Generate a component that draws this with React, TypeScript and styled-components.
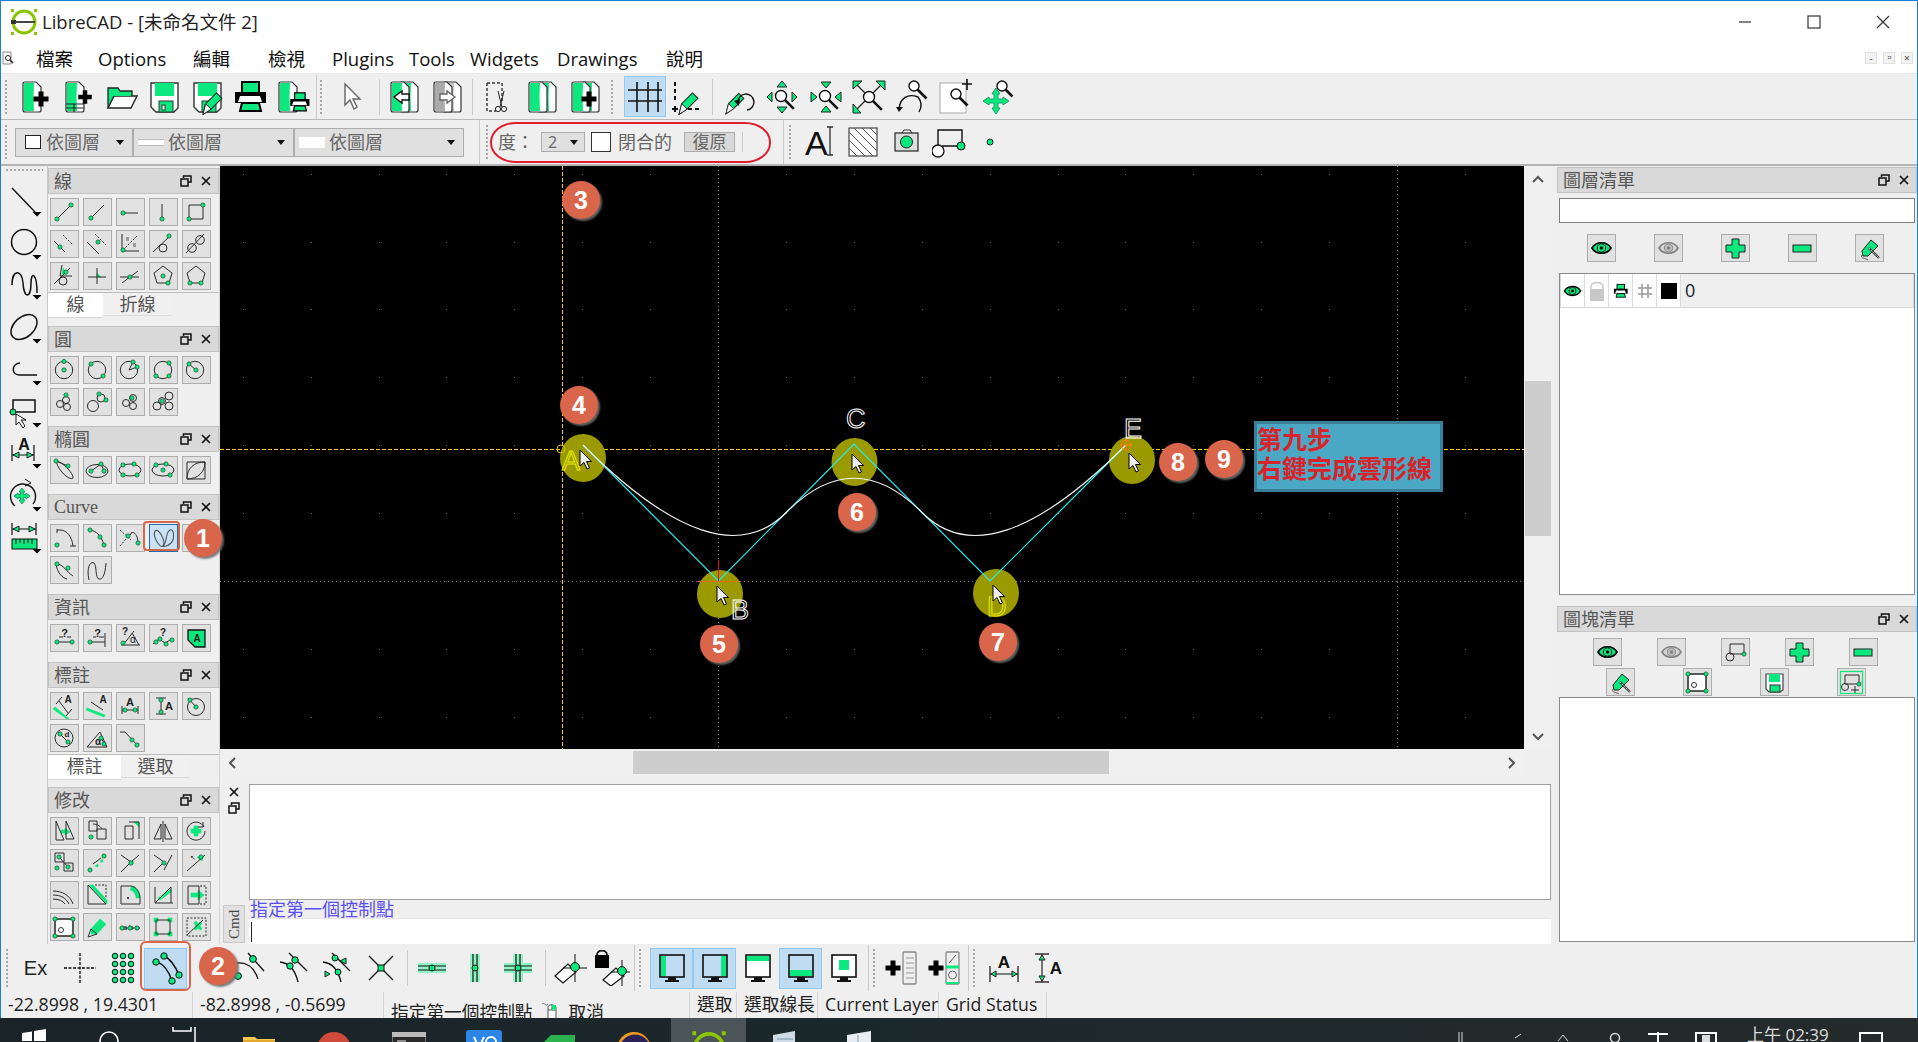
import React from 'react';
import styled, { createGlobalStyle } from 'styled-components';

const GREEN = '#0be87e';
const INK = '#2b2b2b';
const UI = '"Open Sans", "Noto Sans CJK TC", sans-serif';

const Global = createGlobalStyle`
  html, body { margin: 0; padding: 0; background: #efefef; overflow: hidden; }
  * { box-sizing: border-box; }
  svg { display: block; }
`;

const Page = styled.div`position: relative; width: 1918px; height: 1042px; overflow: hidden; font-family: ${UI}; color: #111; display: flex; flex-direction: column;`;
const Frame = styled.div`width: 1918px; height: 1018px; flex: none; border: 1px solid #1a82d4; border-bottom: 0; background: #efefef; display: flex; flex-direction: column;`;
const TitleBar = styled.div`height: 46px; flex: none; background: #fff; display: flex; align-items: center; padding: 0 0 4px 9px; font-size: 18.5px; color: #222;`;
const TitleText = styled.span`margin-left: 4px; white-space: nowrap; margin-top: -3px;`;
const WinButtons = styled.div`margin-left: auto; display: flex; align-items: center;`;
const WinButton = styled.div`width: 69px; height: 42px; display: flex; align-items: center; justify-content: center;`;
const MenuBar = styled.div`height: 27px; flex: none; background: #fff; display: flex; align-items: center; position: relative; font-size: 18.5px; color: #111; border-bottom: 1px solid #e8e8e8; padding-bottom: 4px;`;
const MenuItem = styled.span<{ $w: number }>`width: ${p => p.$w}px; flex: none; white-space: nowrap; line-height: 25px;`;
const MdiButtons = styled.div`margin-left: auto; display: flex; gap: 6px; padding-right: 4px;`;
const MdiButton = styled.div`width: 12px; height: 12px; background: #f2f2f2; border: 1px solid #e2e2e2; color: #555; font-size: 11px; line-height: 9px; text-align: center;`;

const ToolRow = styled.div<{ $h: number; $line?: boolean }>`height: ${p => p.$h}px; flex: none; display: flex; align-items: center; background: #efefef; position: relative; ${p => p.$line ? 'border-top: 1px solid #b9b9b9; border-bottom: 2px solid #b4b4b4;' : ''}`;
const Grip = styled.div<{ $ml?: number; $h?: number }>`width: 4px; height: ${p => p.$h ?? 36}px; flex: none; margin-left: ${p => p.$ml ?? 0}px; background-image: radial-gradient(#a6a6a6 0.9px, transparent 1px); background-size: 4px 4px;`;
const Sep = styled.div<{ $ml?: number; $h?: number }>`width: 1px; height: ${p => p.$h ?? 36}px; flex: none; margin-left: ${p => p.$ml ?? 0}px; background: #c9c9c9;`;
const Slot = styled.div<{ $ml?: number; $w?: number; $active?: boolean }>`
  width: ${p => p.$w ?? 43}px; height: 41px; flex: none; margin-left: ${p => p.$ml ?? 0}px;
  display: flex; align-items: center; justify-content: center;
  ${p => p.$active ? 'background: #c0dcf3; border: 1px solid #90c8f6;' : ''}
`;
const Combo = styled.div<{ $w: number }>`width: ${p => p.$w}px; height: 29px; flex: none; background: #e0e0e0; border: 1px solid #adadad; display: flex; align-items: center; padding: 0 8px; font-size: 18px; line-height: 24px; color: #666; gap: 4px;`;
const ComboArrow = styled.span`margin-left: auto; width: 0; height: 0; border-left: 4px solid transparent; border-right: 4px solid transparent; border-top: 5px solid #111;`;
const ComboRow = styled.div`margin-left: 7px; display: flex;`;
const Swatch = styled.span<{ $kind: string }>`
  flex: none; display: block;
  ${p => p.$kind === 'box' ? 'width:16px;height:14px;background:#fff;border:1px solid #222;margin-left:1px;margin-right:1px;' : ''}
  ${p => p.$kind === 'line' ? 'width:26px;height:7px;background:#fff;border-top:1px solid #bbb;border-bottom:1px solid #bbb;margin-left:-4px;' : ''}
  ${p => p.$kind === 'fill' ? 'width:26px;height:11px;background:#fff;margin-left:-4px;' : ''}
`;
const PlainLabel = styled.span<{ $ml: number; $w?: number }>`margin-left: ${p => p.$ml}px; ${p => p.$w ? `width:${p.$w}px;` : ''} flex: none; font-size: 18px; line-height: 24px; color: #666; white-space: nowrap;`;
const MiniCombo = styled.div`width: 44px; height: 20px; margin-left: 7px; flex: none; background: #e0e0e0; border: 1px solid #adadad; display: flex; align-items: center; padding: 0 6px; font-size: 16px; line-height: 18px; color: #666;`;
const Check = styled.div`width: 20px; height: 20px; margin-left: 6px; flex: none; background: #fff; border: 1px solid #333;`;
const ResetBtn = styled.div`width: 51px; height: 20px; margin-left: 12px; flex: none; background: #d8d8d8; border: 1px solid #adadad; text-align: center; font-size: 17px; line-height: 18px; color: #666;`;

const Main = styled.div`height: 778px; flex: none; display: flex;`;
const ToolColumn = styled.div`width: 47px; flex: none; border-right: 1px solid #c8c8c8; padding-top: 2px;`;
const HGrip = styled.div`height: 4px; margin: 0 4px 7px; background-image: radial-gradient(#a6a6a6 0.9px, transparent 1px); background-size: 4px 4px;`;
const Dock = styled.div`width: 172px; flex: none; border-right: 1px solid #d4d4d4; padding-top: 2px;`;
const DockTitle = styled.div<{ $serif?: boolean; $mt?: number }>`
  height: 26px; flex: none; background: #d9d9d9; border: 1px solid #c2c2c2; display: flex; align-items: center; padding: 0 5px;
  margin-top: ${p => p.$mt ?? 0}px;
  font-family: ${p => p.$serif ? '"Liberation Serif", serif' : UI}; font-size: 18px; line-height: 24px; color: #555;
`;
const TitleLabel = styled.span`flex: 1;`;
const TitleButtons = styled.div`display: flex; align-items: center; gap: 8px; padding-right: 1px;`;
const ButtonGrid = styled.div`display: grid; grid-template-columns: repeat(5, 29px); gap: 4px; padding: 4px 0 0 2px;`;
const IconButton = styled.div<{ $on?: boolean }>`
  width: 29px; height: 28px; flex: none;
  background: ${p => p.$on ? '#c9e2f7' : '#e1e1e1'};
  border: 1px solid ${p => p.$on ? '#1f6fb0' : '#adadad'};
`;
const TabBar = styled.div`margin-top: 2px; display: flex; border-top: 1px solid #bdbdbd; height: 26px; align-items: flex-start;`;
const Tab = styled.div<{ $w: number; $on?: boolean }>`
  width: ${p => p.$w}px; height: ${p => p.$on ? 25 : 23}px; flex: none; text-align: center; font-size: 18px; line-height: 22px; color: #555;
  background: ${p => p.$on ? '#fff' : '#f0f0f0'}; border-bottom: 1px solid ${p => p.$on ? '#d5d5d5' : '#dcdcdc'};
`;

const Center = styled.div`width: 1331px; flex: none; display: flex; flex-direction: column;`;
const CanvasRow = styled.div`height: 583px; flex: none; display: flex;`;
const Canvas = styled.div`width: 1304px; flex: none; background: #000;`;
const VScroll = styled.div`flex: 1; display: flex; flex-direction: column; align-items: stretch; background: #f0f0f0; padding-left: 1px;`;
const VThumb = styled.div`height: 155px; flex: none; background: #cdcdcd;`;
const ArrowCell = styled.div<{ $h: number }>`height: ${p => p.$h}px; flex: none; display: flex; align-items: center; justify-content: center;`;
const Spacer = styled.div<{ $size?: number }>`${p => p.$size ? `flex: 0 0 ${p.$size}px;` : 'flex: 1;'}`;
const HScroll = styled.div`height: 27px; flex: none; display: flex; align-items: center; width: 1304px; background: #f0f0f0;`;
const HThumb = styled.div`width: 476px; height: 23px; flex: none; background: #cdcdcd;`;
const HArrow = styled.div`width: 26px; height: 26px; flex: none; display: flex; align-items: center; justify-content: center;`;
const CommandArea = styled.div`flex: 1; display: flex; padding-top: 8px;`;
const CommandSide = styled.div`width: 29px; flex: none; display: flex; flex-direction: column; align-items: center; padding: 2px 2px 0 0; gap: 4px;`;
const CmdLabel = styled.div`margin-top: auto; margin-bottom: 1px; width: 22px; height: 38px; background: #e1e1e1; border: 1px solid #c9c9c9; font-family: "Liberation Serif", serif; font-size: 15px; color: #444; writing-mode: vertical-rl; transform: rotate(180deg); display: flex; align-items: center; justify-content: center;`;
const CommandMain = styled.div`flex: 1; display: flex; flex-direction: column;`;
const Output = styled.div`height: 116px; flex: none; background: #fff; border: 1px solid #a0a0a0;`;
const History = styled.div`height: 18px; flex: none; padding-left: 1px; font-size: 18px; line-height: 19px; color: #5a50ee; white-space: nowrap;`;
const InputLine = styled.div`flex: 1; background: #fff; border-top: 1px solid #e6e6e6; display: flex; align-items: center; padding-left: 2px;`;
const Caret = styled.span`width: 1px; height: 20px; background: #222;`;

const RightDock = styled.div`flex: 1; padding: 1px 0 0 6px; display: flex; flex-direction: column;`;
const RightInput = styled.div`height: 25px; flex: none; margin: 5px 2px 0; background: #fff; border: 1px solid #7c7c7c;`;
const ButtonRow = styled.div<{ $gap: number; $pl: number; $mt: number }>`display: flex; flex: none; gap: ${p => p.$gap}px; padding-left: ${p => p.$pl}px; margin-top: ${p => p.$mt}px;`;
const LayerList = styled.div`height: 322px; flex: none; margin: 11px 2px 0; background: #fff; border: 1px solid #8a8a8a;`;
const LayerRow = styled.div`height: 34px; display: flex; background: #efefef; border: 1px solid #d8d8d8; border-top: 0;`;
const LayerCell = styled.div`width: 24px; height: 33px; flex: none; background: #fff; border-right: 1px solid #dcdcdc; display: flex; align-items: center; justify-content: center;`;
const LayerName = styled.div`padding-left: 4px; font-size: 18px; line-height: 33px; color: #123;`;
const BlockList = styled.div`height: 245px; flex: none; margin: 1px 2px 0; background: #fff; border: 1px solid #8a8a8a;`;

const BottomBar = styled.div`height: 48px; flex: none; display: flex; align-items: center; background: #efefef;`;
const ExLabel = styled.span`font-family: "Liberation Sans", sans-serif; font-size: 20px; color: #222; margin-left: -2px;`;
const StatusBar = styled.div`height: 26px; flex: none; display: flex; background: #efefef; font-size: 17.7px; color: #222; overflow: hidden;`;
const StatusCell = styled.div<{ $w: number; $top?: number }>`width: ${p => p.$w}px; flex: none; height: 26px; padding-left: 7px; border-right: 1px solid #d4d4d4; line-height: 25px; white-space: nowrap; display: flex; gap: 8px; ${p => p.$top ? `padding-top:${p.$top}px;` : ''}`;

const Taskbar = styled.div`height: 24px; flex: none; background: linear-gradient(90deg, #1a2428, #1b282b 45%, #262b2b); display: flex; overflow: hidden; position: relative;`;
const TaskSlot = styled.div<{ $on?: boolean; $top: number }>`width: 75px; height: 24px; flex: none; display: flex; justify-content: center; padding-top: ${p => p.$top}px; background: ${p => p.$on ? '#4b5456' : 'transparent'};`;
const TaskStart = styled.div`width: 0; flex: none; margin-left: -4px;`;
const Tray = styled.div`margin-left: auto; display: flex; padding-top: 14px; padding-right: 35px; gap: 26px;`;
const ClockText = styled.div`position: absolute; left: 1747px; top: 3px; font-size: 17px; color: #ddd; white-space: nowrap;`;

const Badge = styled.div<{ $x: number; $y: number }>`
  position: absolute; left: ${p => p.$x - 19}px; top: ${p => p.$y - 19}px; width: 38px; height: 38px; border-radius: 50%;
  background: #d9654a; box-shadow: 2px 2px 2px rgba(110,110,110,.9); color: #fff;
  font: bold 25px/38px "Liberation Sans", sans-serif; text-align: center;
`;
const Ring = styled.div<{ $x: number; $y: number; $w: number; $h: number; $r: number }>`
  position: absolute; left: ${p => p.$x}px; top: ${p => p.$y}px; width: ${p => p.$w}px; height: ${p => p.$h}px;
  border: 2px solid #d9654a; border-radius: ${p => p.$r}px;
`;
const RedOval = styled.div`position: absolute; left: 490px; top: 122px; width: 281px; height: 41px; border: 2px solid #e01e2e; border-radius: 26px / 20px;`;
const Note = styled.div`
  position: absolute; left: 1254px; top: 421px; width: 189px; height: 71px; background: #4aa8c4; border: 3px solid #3a7f97;
  color: #d8232a; font: bold 25px/29px "Noto Sans CJK TC", sans-serif; padding: 0; white-space: nowrap;
`;

/* ---------- small dock icons ---------- */
type Pt = [number, number];
interface Glyph { d?: string; dots?: Pt[]; green?: string; dash?: string; extra?: React.ReactNode; }
const circ = (x: number, y: number, r: number) => `M${x - r} ${y}a${r} ${r} 0 1 0 ${2 * r} 0a${r} ${r} 0 1 0 ${-2 * r} 0`;
const ell = (x: number, y: number, a: number, b: number) => `M${x - a} ${y}a${a} ${b} 0 1 0 ${2 * a} 0a${a} ${b} 0 1 0 ${-2 * a} 0`;
const g = (d: string, dots: Pt[] = [], green = '', dash = '', extra?: React.ReactNode): Glyph => ({ d, dots, green, dash, extra });
const T = ({ x, y, s = 9, c = '#222', w = 700, children }: { x: number; y: number; s?: number; c?: string; w?: number; children: React.ReactNode }) => (
  <text x={x} y={y} fontSize={s} fontWeight={w} fill={c} fontFamily='"Liberation Sans", sans-serif' textAnchor="middle">{children}</text>
);

const Small = ({ g: gl }: { g: Glyph }) => (
  <svg width="27" height="26" viewBox="1 1 27 26">
    {gl.green && <path d={gl.green} fill={GREEN} stroke={GREEN} strokeWidth=".6" />}
    {gl.d && <path d={gl.d} fill="none" stroke={INK} strokeWidth="1" />}
    {gl.dash && <path d={gl.dash} fill="none" stroke={INK} strokeWidth="1" strokeDasharray="2 1.5" />}
    {gl.extra}
    {gl.dots?.map(([x, y], i) => <circle key={i} cx={x} cy={y} r="2.1" fill={GREEN} stroke="#1d5c3b" strokeWidth=".8" />)}
  </svg>
);

const lineTools: Glyph[] = [
  g('M7 21L21 7', [[7, 21], [21, 7]]),
  g('M8 20L21 7', [[8, 20]]),
  g('M7 15H22', [[7, 15]]),
  g('M13 6V21', [[13, 21]]),
  g('M7 7H21V21H7Z', [[7, 21], [21, 7]]),
  g('M4 11L15 22', [[10, 17]], '', 'M13 5L23 15'),
  g('M4 12L16 24', [[15, 12]], '', 'M12 4L23 15'),
  g('M6 4V21H23', [[7, 20]], '', 'M7 20L21 6', <><path d="M10 8h3M10 10h3M17 14h3M17 16h3" stroke="#555" strokeWidth="1" /></>),
  g(`M4 22L21 6${circ(14, 18, 4)}`, [[20, 6]]),
  g(`M4 23L22 4${circ(10, 18, 4.3)}${circ(18, 10, 4.3)}`),
  g(`M12 3L10 14L22 14M4 22L20 6${circ(13, 19, 4)}`, [[16, 10]], 'M13 6L17 12L12 13Z'),
  g('M14 6V22M5 15H23', [], 'M14 11L18 15H14Z'),
  g('M4 15H23M6 21L22 9', [[14, 15]]),
  g('M14 4L23 11L20 21H8L5 11Z', [[14, 14], [19, 21]]),
  g('M14 4L23 11L20 21H8L5 11Z', [[8, 21], [19, 21]]),
];
const circleTools: Glyph[] = [
  g(circ(14, 14, 8.7), [[14, 14], [14, 5.5]]),
  g(circ(14, 14, 8.7), [[8, 8], [20, 20]]),
  g(`${circ(13, 14, 8.7)}M13 14L17 6M13 14L21 11`, [[17, 6], [21, 11]]),
  g(circ(14, 14, 8.7), [[7, 20], [20, 7], [20, 20]]),
  g(`${circ(13, 14, 8.7)}M7 8L14 14`, [[7, 8], [14, 14]]),
  g(`${circ(16, 12, 3.5)}${circ(10, 16, 3.5)}${circ(17, 19, 3.5)}`, [[16, 7]]),
  g(`${circ(10, 18, 5.5)}${circ(18, 10, 4)}`, [[16, 6], [23, 12]]),
  g(`${circ(10, 15, 3.5)}${circ(17, 10, 3.5)}${circ(17, 18, 3.5)}`, [[16, 10]]),
  g(`${circ(8, 18, 4)}${circ(20, 8, 4)}${circ(20, 18, 4)}${circ(13, 13, 3.5)}`, [[13, 13]]),
];
const ellipseTools: Glyph[] = [
  g('M6 5C12 5 24 18 23 22C21 25 9 17 6 5ZM6 5L18 10', [[6, 5], [18, 10]]),
  g(`${ell(14, 15, 11, 6.5)}M8 15L18 8L21 15`, [[8, 15], [18, 8], [21, 15]]),
  g(ell(14, 14, 11, 6), [[7, 9], [18, 8], [7, 19], [21, 19]]),
  g(ell(14, 14, 11, 6), [[7, 9], [17, 8], [21, 19], [14, 14]]),
  g('M5 6H23V23H5ZM5 23C5 12 12 6 23 6C23 16 16 23 5 23Z'),
];
const curveTools: Glyph[] = [
  g('M7 5V9M7 6H10C17 6 22 13 23 22M20 22H26', [[7, 21]]),
  g('M7 6C13 7 18 11 21 21', [[7, 6], [17, 13], [21, 21]]),
  g('M14 11C17 5 22 11 22 19', [[22, 19], [12, 12]], '', 'M4 6L15 16M4 22L16 8'),
  g('', [], '', '', <path d="M6 7C10 3 17 18 14 22C11 25 3 12 6 7ZM14 22C18 21 16 8 21 6C25 4 26 15 22 19C19 22 15 23 14 22Z" fill="none" stroke="#555" strokeWidth="1.1" />),
  g('M5 8L12 22'),
  g('M6 8C14 8 16 16 23 20M6 8C7 16 12 22 17 23', [[7, 8], [18, 12]]),
  g('M6 24C3 10 8 5 11 7C14 10 12 22 16 23C19 24 22 20 23 7'),
];
const infoTools: Glyph[] = [
  g('M7 18H22M9 13H13M17 13H21', [[7, 18], [22, 18]], '', '', <T x={14.5} y={13} s={11}>?</T>),
  g('M7 18H22M22 9V23M10 13H13M16 13H21', [[7, 18]], '', '', <T x={14.5} y={13} s={11}>?</T>),
  g('M5 21H24M7 21L18 7M16 9L23 21', [[7, 19]], '', '', <><T x={9} y={11} s={10}>?</T><T x={17} y={19} s={10} w={400}>α</T></>),
  g('M4 20L10 15L16 19L23 15', [[7, 18], [11, 15], [17, 20], [23, 16]], '', '', <T x={14} y={12} s={10}>?</T>),
  g('', [], '', '', <><path d="M6 6H23V23H13L6 16Z" fill={GREEN} stroke="#111" strokeWidth="1.3" /><T x={15} y={18} s={10}>A</T></>),
];
const dimTools: Glyph[] = [
  g('M9 9L18 21M6 12L12 5M16 24L22 17', [], 'M3 17L5 15L19 27L17 27Z', '', <T x={18} y={11} s={10}>A</T>),
  g('M8 10L20 18', [], 'M3 18L4 16L22 23L21 25Z', '', <T x={20} y={11} s={10}>A</T>),
  g('M6 14V22M22 14V22M6 18H22', [[9, 18], [19, 18]], '', '', <T x={14} y={14} s={11}>A</T>),
  g('M7 6H17M7 22H17M12 6V22', [[12, 8], [12, 20]], '', '', <T x={20} y={18} s={11}>A</T>),
  g(`${circ(14, 15, 8.5)}M6 6L14 15`, [[8, 8], [14, 15]]),
  g(`${circ(14, 14, 9)}M8 8L20 20`, [[10, 10], [18, 18]], '', '', <T x={17} y={13} s={8}>d</T>),
  g('M4 23H24L17 8ZM17 14A9 9 0 0 1 21 22', [[18, 14], [21, 20]], '', '', <T x={15} y={21} s={10}>α</T>),
  g('M4 8H9L21 21', [[16, 16], [21, 21]]),
];
const modifyTools: Glyph[] = [
  g('M6 4L6 23H14L6 4ZM16 4L24 22H16Z', [], 'M11 13H15V11L20 15L15 18V16H11Z'),
  g(`M6 4H14V14H6ZM14 12H23V22H14ZM10 7C15 7 18 10 19 12`, [[8, 20]]),
  g('M9 9H17V22H9ZM13 5H23V22', [], 'M18 5H23V10Z'),
  g('M5 22L12 7V22ZM23 22L16 7V22ZM14 4V25'),
  g(`M22 10A9 9 0 1 0 23 14`, [], 'M12 9H16V12H19V16H16V19H12V16H9V12H12Z', '', <path d="M21 5V10H16" fill="none" stroke={INK} />),
  g('M5 4H14V13H5ZM14 14H23V22H14ZM9 8L18 18', [[7, 19], [9, 8], [18, 18]]),
  g('M10 15L18 9', [[7, 21], [21, 7]], 'M12 17L15 15L15 18ZM17 13L19 10L20 13Z'),
  g('M5 6L15 13L5 23M23 6L15 13', [[15, 14]], 'M14 12h3v3h-3z'),
  g('M5 6L15 13L5 23M23 6L15 21', [[15, 14]]),
  g('M5 22L23 6', [[19, 8]], 'M15 8L21 7L20 12Z', '', <T x={11} y={11} s={7} w={400}>↖</T>),
  g('M3 10C12 10 20 14 23 23M3 14C11 14 16 17 19 23M3 18C9 18 13 20 15 23'),
  g('M5 4V23H23L5 4', [], 'M6 4L10 4L24 19V23Z', 'M12 4H23V16'),
  g('M5 5H14C20 5 24 11 24 17V23H5Z', [], 'M16 5C20 6 24 11 24 17H20C20 13 17 9 14 9Z', '', <circle cx="12" cy="17" r="1" fill="#111" />),
  g('M6 6V22H24M6 22L22 6M22 6V22', [], 'M9 17L22 8L22 11L11 19Z'),
  g('M6 5H17V23H6Z', [], 'M9 12H16V9L22 14L16 19V16H9Z', 'M18 5H24V23H18'),
  g('', [[5, 6], [23, 6], [5, 23], [23, 23]], '', '', <><rect x="5" y="6" width="18" height="17" fill="#fff" stroke="#333" strokeWidth="1.6" /><circle cx="11" cy="17" r="2.5" fill="#fff" stroke="#333" /></>),
  g('', [], 'M8 16L17 6L23 11L14 21L8 21Z', '', <path d="M8 16L5 24L14 21M14 21L8 16" fill="none" stroke="#333" />),
  g('M4 15H24', [[6, 15], [14, 15], [21, 15]], '', '', <><T x={9} y={17} s={8} w={400}>a</T><T x={15} y={17} s={8} w={400}>b</T><T x={21} y={17} s={8} w={400}>c</T></>),
  g('M7 7H21V21H7Z', [], 'M5 5h4v4H5zM19 5h4v4h-4zM5 19h4v4H5zM19 19h4v4h-4z'),
  g('M5 22L21 7', [], 'M12 10L14 8L16 11L18 9L20 10L18 13L20 16L18 17L16 15L14 17L12 16L14 13Z', 'M5 5H24V23H5Z'),
];

const Eye = ({ gray }: { gray?: boolean }) => (
  <svg width="27" height="26" viewBox="1 1 27 26" style={gray ? { opacity: .42 } : undefined}>
    <path d="M5 14C9 7 20 7 24 14C20 21 9 21 5 14Z" fill={gray ? '#ccc' : GREEN} stroke="#000" strokeWidth="1.7" />
    <circle cx="14.5" cy="14" r="4.2" fill={gray ? '#888' : GREEN} stroke="#111" />
    <circle cx="14.5" cy="14" r="1.7" fill="#000" />
  </svg>
);
const plusG = g('', [], '', '', <path d="M11 5H18V11H24V18H18V24H11V18H5V11H11Z" fill={GREEN} stroke="#222" strokeWidth="1" />);
const minusG = g('', [], '', '', <rect x="5" y="11" width="18" height="7" fill={GREEN} stroke="#222" />);
const editG = g('', [], '', '', <><path d="M7 17L16 6L23 12L13 22L8 22Z" fill={GREEN} stroke="#222" /><path d="M14 14L24 24" stroke="#444" strokeWidth="2.4" /><path d="M14 14L24 24" stroke="#fff" strokeWidth=".8" strokeDasharray="1.5 1.5" /><path d="M7 21C5 25 11 24 13 26" fill="none" stroke="#555" /></>);
const blockG = g(`M9 16V6H23V16M9 16H23${circ(9, 19, 4)}`, [[23, 16]]);
const saveG = g('', [], '', '', <><path d="M6 6H23V22L20 24H9L6 21Z" fill="#fff" stroke="#444" strokeWidth="1.2" /><rect x="9" y="6" width="11" height="8" fill={GREEN} /><rect x="10" y="17" width="10" height="7" fill={GREEN} stroke="#333" /></>);
const addBlockG = g(`M8 16V7H22V16M8 16H22${circ(8, 19, 3.5)}M14 22H22M18 18V26`, [[22, 16]], '', '', <rect x="3.5" y="3.5" width="22" height="22" fill="none" stroke={GREEN} strokeWidth="1.2" />);

/* ---------- big toolbar icons ---------- */
const Big = ({ children, w = 36, h = 36 }: { children: React.ReactNode; w?: number; h?: number }) => (
  <svg width={w} height={h} viewBox={`0 0 ${w} ${h}`}>{children}</svg>
);
const Page2 = ({ x = 4, fill = GREEN }: { x?: number; fill?: string }) => (
  <>
    <path d={`M${x} 5Q${x} 3 ${x + 2} 3H${x + 13}L${x + 18} 8V31Q${x + 18} 33 ${x + 16} 33H${x + 2}Q${x} 33 ${x} 31Z`} fill="#fff" stroke="#333" strokeWidth="1.2" />
    <path d={`M${x + 1} 5Q${x + 1} 4 ${x + 2} 4H${x + 11}Q${x + 10} 18 ${x + 11} 32H${x + 2}Q${x + 1} 32 ${x + 1} 31Z`} fill={fill} />
  </>
);
const BlackPlus = ({ x, y, s = 4 }: { x: number; y: number; s?: number }) => (
  <path d={`M${x - s / 2} ${y - s * 1.5}h${s}v${s}h${s}v${s}h${-s}v${s}h${-s}v${-s}h${-s}v${-s}h${s}z`} fill="#000" />
);
const Floppy = ({ children }: { children?: React.ReactNode }) => (
  <>
    <path d="M4 4H31V29L27 33H9L4 28Z" fill="#fff" stroke="#333" strokeWidth="1.4" />
    <rect x="8" y="4" width="19" height="13" fill={GREEN} />
    <rect x="12" y="22" width="14" height="11" fill={GREEN} stroke="#333" />
    <rect x="15" y="26" width="3" height="5" fill="#fff" stroke="#333" />
    {children}
  </>
);
const Printer = ({ sc = 1 }: { sc?: number }) => (
  <g transform={`scale(${sc})`}>
    <rect x="9" y="3" width="17" height="11" fill={GREEN} stroke="#000" strokeWidth="2" />
    <rect x="2" y="13" width="31" height="11" fill="#000" />
    <path d="M7 17H27L29 23H5Z" fill="#fff" />
    <path d="M9 24H26L28 32H7Z" fill={GREEN} stroke="#000" strokeWidth="2" />
  </g>
);
const Pencil = ({ tr }: { tr: string }) => (
  <g transform={tr}>
    <path d="M0 15L3 3L15 -9L21 -3L9 9Z" fill={GREEN} stroke="#222" strokeWidth="1.2" />
    <path d="M0 15L3 3L9 9Z" fill="#fff" stroke="#222" strokeWidth="1" />
  </g>
);
const Mag = ({ x, y, r = 5.5, l = 9 }: { x: number; y: number; r?: number; l?: number }) => (
  <>
    <circle cx={x} cy={y} r={r} fill="#fff" stroke="#111" strokeWidth="1.4" />
    <path d={`M${x + r * .7} ${y + r * .7}l${l} ${l}`} stroke="#111" strokeWidth="2.6" />
  </>
);
const tri = (p: string) => <path d={p} fill={GREEN} stroke="#222" strokeWidth="1" />;

const top1: React.ReactNode[] = [
  <Big><Page2 x={5} /><BlackPlus x={23} y={20} s={5} /></Big>,
  <Big><Page2 x={5} /><path d="M5 25H23M5 29H23M13 25V33" stroke="#222" strokeWidth="1.2" /><BlackPlus x={24} y={18} s={4.5} /></Big>,
  <Big><path d="M4 29V9H14L16 12H28V17" fill={GREEN} stroke="#222" strokeWidth="1.3" /><path d="M4 29L10 17H33L27 29Z" fill="#fff" stroke="#222" strokeWidth="1.4" /><path d="M5 17V12H13L15 14H27V17Z" fill={GREEN} /></Big>,
  <Big><Floppy /></Big>,
  <Big><Floppy><Pencil tr="translate(13 22) scale(.9)" /></Floppy></Big>,
  <Big><Printer /></Big>,
  <Big><Page2 x={3} /><g transform="translate(13 12) scale(.62)"><Printer /></g></Big>,
];
const selectIcon = <Big><path d="M10 5V26L15 21L19 30L22 28L18 20H25Z" fill="#fff" stroke="#666" strokeWidth="1.4" /></Big>;
const undoIcon = <Big><Page2 x={13} /><Page2 x={4} /><path d="M7 18L15 12V15H22V21H15V24Z" fill="#fff" stroke="#111" strokeWidth="1.4" /></Big>;
const redoIcon = <Big><Page2 x={13} fill="#c4c4c4" /><Page2 x={4} fill="#aaa" /><path d="M25 18L17 12V15H10V21H17V24Z" fill="#fff" stroke="#666" strokeWidth="1.4" /></Big>;
const cutIcon = <Big><path d="M9 4H24V22M9 4V32H18" fill="none" stroke="#333" strokeWidth="1.4" strokeDasharray="3 2" /><path d="M20 12L24 28M26 12L22 28" stroke="#222" strokeWidth="1" /><circle cx="20" cy="30" r="2.6" fill="none" stroke="#222" /><circle cx="26" cy="30" r="2.6" fill="none" stroke="#222" /></Big>;
const copyIcon = <Big><Page2 x={13} /><Page2 x={4} /></Big>;
const pasteIcon = <Big><Page2 x={13} /><Page2 x={4} /><BlackPlus x={21} y={20} s={5} /></Big>;
const gridIcon = <Big><path d="M10 3V33M21 3V33M31 3V33M1 11H35M1 22H35" stroke="#111" strokeWidth="1.6" /></Big>;
const draftIcon = <Big><path d="M5 3V24M4 30H32" stroke="#111" strokeWidth="2" strokeDasharray="4 3" /><path d="M2 30H8M5 27V33" stroke="#111" strokeWidth="2" /><Pencil tr="translate(9 22) scale(.9)" /></Big>;
const view: React.ReactNode[] = [
  <Big><Pencil tr="translate(5 22) scale(.85)" /><path d="M26 31A8 8 0 1 0 17 24" fill="none" stroke="#111" strokeWidth="1.4" /><path d="M13 22L19 20L18 27Z" fill="#111" /></Big>,
  <Big>{tri('M18 2L23 8H13Z')}{tri('M18 34L13 28H23Z')}{tri('M3 18L8 13V23Z')}{tri('M33 18L28 23V13Z')}<Mag x={17} y={17} /></Big>,
  <Big>{tri('M18 9L13 3H23Z')}{tri('M18 27L23 33H13Z')}{tri('M9 18L3 13V23Z')}{tri('M27 18L33 23V13Z')}<Mag x={17} y={17} /></Big>,
  <Big><path d="M6 6L30 30M30 6L6 30" stroke="#222" strokeWidth="1.3" />{tri('M2 2H11L2 10Z')}{tri('M34 2V11L25 2Z')}{tri('M2 34V25L10 34Z')}<Mag x={18} y={18} /></Big>,
  <Big><path d="M4 30C5 19 13 14 23 18C27 23 27 28 24 33" fill="none" stroke="#111" strokeWidth="1.4" /><path d="M1 28L8 28L4 33Z" fill="#111" /><Mag x={19} y={7} r={5} /></Big>,
  <Big><rect x="2" y="4" width="26" height="30" fill="#fff" stroke="#bbb" strokeWidth="1.3" /><Mag x={18} y={15} r={5} l={8} /><path d="M29 0V11M24 5H34" stroke="#111" strokeWidth="1.6" /></Big>,
  <Big><path d="M14 9L18 15H16V20H21V18L27 22L21 26V24H16V29H18L14 35L10 29H12V24H7V26L1 22L7 18V20H12V15H10Z" fill={GREEN} stroke="#1ba266" strokeWidth="1" /><Mag x={20} y={7} r={5} l={7} /></Big>,
];
const row2Icons: React.ReactNode[] = [
  <Big><text x="2" y="31" fontSize="34" fontFamily='"Liberation Sans", sans-serif' fill="#111">A</text><path d="M27 3V31M24 3H30M24 31H30" stroke="#333" strokeWidth="1.3" /></Big>,
  <Big><rect x="3" y="4" width="28" height="28" fill="#fff" stroke="#444" strokeWidth="1.2" /><path d="M3 8L27 32M3 16L19 32M3 24L11 32M8 4L31 27M16 4L31 19M24 4L31 11" stroke="#444" strokeWidth=".9" /></Big>,
  <Big><rect x="6" y="9" width="23" height="18" fill="#ddd" stroke="#333" strokeWidth="1.3" /><path d="M13 9L15 6H21L23 9" fill="none" stroke="#333" /><circle cx="17.500" cy="18" r="6" fill={GREEN} stroke="#222" /></Big>,
  <Big><path d="M6 27V6H30V22M10 22H26" fill="none" stroke="#111" strokeWidth="1.4" /><circle cx="6" cy="27" r="6" fill="#fff" stroke="#111" strokeWidth="1.3" /><circle cx="29" cy="22" r="4" fill={GREEN} stroke="#111" /></Big>,
  <Big><circle cx="15" cy="18" r="3" fill={GREEN} stroke="#222" /></Big>,
];

const snapIcons: React.ReactNode[] = [
  <Big><path d="M14 3L30 21M3 13C12 12 20 17 24 29" fill="none" stroke="#111" strokeWidth="1.3" /><circle cx="19" cy="9" r="3.4" fill={GREEN} stroke="#111" /><circle cx="4" cy="26" r="3.4" fill={GREEN} stroke="#111" /></Big>,
  <Big><path d="M12 3L30 21M3 12C12 13 18 19 21 32" fill="none" stroke="#111" strokeWidth="1.3" /><circle cx="18" cy="10" r="3.2" fill={GREEN} stroke="#111" /><circle cx="13" cy="16" r="3.2" fill={GREEN} stroke="#111" /></Big>,
  <Big><path d="M12 3L30 21M3 12C12 13 18 19 21 32" fill="none" stroke="#111" strokeWidth="1.3" /><circle cx="15" cy="8" r="3" fill={GREEN} stroke="#111" /><circle cx="18" cy="22" r="3" fill={GREEN} stroke="#111" />{tri('M26 8L20 11L26 14Z')}{tri('M5 21L10 24L5 27Z')}</Big>,
  <Big><path d="M6 6L30 30M30 6L6 30" stroke="#111" strokeWidth="1.3" /><rect x="15" y="15" width="6" height="6" fill={GREEN} stroke="#111" /></Big>,
];
const BAND = '#8ff5c4';
const restrictIcons: React.ReactNode[] = [
  <Big><rect x="4" y="13" width="28" height="10" fill={BAND} /><path d="M4 16H32M4 20H32" stroke="#111" strokeWidth="1.2" /><circle cx="18" cy="18" r="3" fill={GREEN} stroke="#111" /></Big>,
  <Big><rect x="13" y="4" width="10" height="28" fill={BAND} /><path d="M16 4V32M20 4V32" stroke="#111" strokeWidth="1.2" /><circle cx="18" cy="18" r="3" fill={GREEN} stroke="#111" /></Big>,
  <Big><path d="M4 13H32V23H4ZM13 4H23V32H13Z" fill={BAND} /><path d="M4 16H32M4 20H32M16 4V32M20 4V32" stroke="#111" strokeWidth="1.2" /><circle cx="18" cy="18" r="3" fill={GREEN} stroke="#111" /></Big>,
];
const Snap0 = (
  <Big><path d="M4 26L17 14L25 22L12 33Z" fill="#fff" stroke="#111" strokeWidth="1.2" /><path d="M24 4V32M12 18H36" stroke="#111" strokeWidth="1" /><circle cx="24" cy="17" r="4.4" fill={GREEN} stroke="#111" /></Big>
);
const Snap1 = (
  <Big><path d="M3 5C3 -1 13 -1 13 5" fill="none" stroke="#111" strokeWidth="1.8" /><rect x="1" y="5" width="14" height="13" fill="#000" /><path d="M9 30L22 18L30 26L17 36Z" fill="#fff" stroke="#111" strokeWidth="1.2" /><path d="M28 10V36M17 22H36" stroke="#111" strokeWidth="1" /><circle cx="28" cy="21" r="4.4" fill={GREEN} stroke="#111" /></Big>
);
const Monitor = ({ green, on }: { green: [number, number, number, number]; on?: boolean }) => (
  <Big>
    <rect x="6" y="5" width="24" height="22" fill={on ? 'none' : '#fff'} stroke="#111" strokeWidth="1.6" />
    <rect x={green[0]} y={green[1]} width={green[2]} height={green[3]} fill={GREEN} />
    <path d="M15 28H21V30H15ZM11 31H25" stroke="#111" strokeWidth="2" />
  </Big>
);
const AddList = (
  <Big><rect x="20" y="2" width="13" height="32" rx="1" fill="#eee" stroke="#888" strokeWidth="1.3" /><path d="M23 8H31M23 13H31M23 18H31M23 23H31M23 28H31" stroke="#999" strokeWidth="1.2" /><BlackPlus x={10} y={18} s={5} /></Big>
);
const AddBlock = (
  <Big><rect x="20" y="2" width="13" height="32" rx="1" fill="#eee" stroke="#888" strokeWidth="1.3" /><path d="M20 17H33" stroke={GREEN} strokeWidth="3" /><path d="M23 13L30 5" stroke="#555" /><circle cx="26.500" cy="25" r="4" fill="none" stroke="#666" /><path d="M20 33H33" stroke={GREEN} strokeWidth="2" /><BlackPlus x={10} y={18} s={5} /></Big>
);
const dimH = <Big><path d="M4 16V32M32 16V32M4 24H32" stroke="#111" strokeWidth="1.2" />{tri('M5 24L10 21V27Z')}{tri('M31 24L26 21V27Z')}<text x="18" y="18" textAnchor="middle" fontSize="17" fontWeight="700" fontFamily='"Liberation Sans", sans-serif' fill="#111">A</text></Big>;
const dimV = <Big><path d="M6 4H20M6 32H20M13 4V32" stroke="#333" strokeWidth="1.3" />{tri('M13 5L10 10H16Z')}{tri('M13 31L10 26H16Z')}<text x="27" y="24" textAnchor="middle" fontSize="17" fontWeight="700" fontFamily='"Liberation Sans", sans-serif' fill="#111">A</text></Big>;

/* ---------- left tool column ---------- */
const Dn = ({ x = 36, y = 33 }: { x?: number; y?: number }) => <path d={`M${x - 4.500} ${y}h9l-4.500 4.500z`} fill="#000" />;
const columnIcons: React.ReactNode[] = [
  <><path d="M11 9L34 33" stroke="#111" strokeWidth="1.4" /><Dn /></>,
  <><circle cx="23" cy="21" r="12.500" fill="none" stroke="#111" strokeWidth="1.5" /><Dn y={34} /></>,
  <><path d="M11 22C11 6 21 6 22 20C23 36 30 36 30 20C30 8 36 10 36 30" fill="none" stroke="#111" strokeWidth="1.5" /><Dn y={32} /></>,
  <><ellipse cx="23" cy="22" rx="15" ry="10" transform="rotate(-42 23 22)" fill="none" stroke="#111" strokeWidth="1.5" /><Dn y={34} /></>,
  <><path d="M19 16C10 17 10 28 19 28H36" fill="none" stroke="#111" strokeWidth="1.5" /><Dn y={34} /></>,
  <><rect x="12" y="11" width="22" height="12" fill="none" stroke="#111" strokeWidth="1.5" /><circle cx="12" cy="23" r="3" fill={GREEN} stroke="#111" /><path d="M15 25L15 36L18 33L22 39L24 37L20 31H25Z" fill="#fff" stroke="#111" /><Dn y={34} /></>,
  <><text x="23" y="19" textAnchor="middle" fontSize="16" fontWeight="700" fontFamily='"Liberation Sans", sans-serif' fill="#111">A</text><path d="M11 14V30M33 14V30M11 24H33" stroke="#111" strokeWidth="1.2" />{tri('M12 24L18 21V27Z')}{tri('M32 24L26 21V27Z')}<Dn y={33} /></>,
  <><path d="M14 33A12.500 12.500 0 1 1 32 31" fill="none" stroke="#111" strokeWidth="1.4" /><path d="M24 6L30 10L24 13" fill="none" stroke="#111" /><path d="M21 15L24 19H22.500V21.500H25V20L29 23L25 26V24.500H22.500V27H24L21 31L18 27H19.500V24.500H17V26L13 23L17 20V21.500H19.500V19H18Z" fill={GREEN} stroke="#1ba266" /><Dn y={34} /></>,
  <><path d="M11 8V20M35 8V20M11 14H35" stroke="#111" strokeWidth="1.2" />{tri('M12 14L18 11V17Z')}{tri('M34 14L28 11V17Z')}<rect x="11" y="24" width="25" height="10" fill={GREEN} stroke="#111" /><path d="M15 24V29M19 24V28M23 24V29M27 24V28M31 24V29" stroke="#111" /><Dn y={34} /></>,
];
const ColumnItem = styled.div`height: 42px; flex: none;`;

const WinFloat = () => (
  <svg width="12" height="12" viewBox="0 0 12 12"><path d="M3.500 3V1H11V7H8.500M1 4H8V11H1Z" fill="none" stroke="#111" strokeWidth="1.5" /></svg>
);
const WinX = () => (
  <svg width="12" height="12" viewBox="0 0 12 12"><path d="M2 2L10 10M10 2L2 10" stroke="#111" strokeWidth="1.7" /></svg>
);
const TitleBtns = () => <TitleButtons><WinFloat /><WinX /></TitleButtons>;

const Logo = ({ s = 28 }: { s?: number }) => (
  <svg width={s} height={s} viewBox="0 0 28 28">
    <circle cx="14" cy="14" r="11" fill="none" stroke="#8bc400" strokeWidth="3" />
    <path d="M1 1h3v3H1zM24 1h3v3h-3zM1 24h3v3H1zM24 24h3v3h-3z" fill="#8bc400" />
    <path d="M1 12h5v4H1z" fill="#333" />
    <path d="M5 14H25" stroke="#444" strokeWidth="2" />
  </svg>
);

const Section = ({ title, serif, mt, glyphs, on }: { title: string; serif?: boolean; mt?: number; glyphs: Glyph[]; on?: number }) => (
  <>
    <DockTitle $serif={serif} $mt={mt}><TitleLabel>{title}</TitleLabel><TitleBtns /></DockTitle>
    <ButtonGrid>
      {glyphs.map((gl, i) => <IconButton key={i} $on={on === i}><Small g={gl} /></IconButton>)}
    </ButtonGrid>
  </>
);

/* ---------- drawing canvas ---------- */
const gridXs = Array.from({ length: 20 }, (_, i) => 718 + (i - 7) * 67.9);
const gridYs = Array.from({ length: 9 }, (_, i) => 581 + (i - 6) * 67.9);
const Cursor = ({ x, y }: { x: number; y: number }) => (
  <path transform={`translate(${x} ${y})`} d="M0 0V16L4 12.500L7 19L9.500 18L6.500 11.500H11.500Z" fill="#eee" stroke="#000" strokeWidth="1" />
);
const CadText = ({ x, y, c, children }: { x: number; y: number; c: string; children: string }) => (
  <text x={x} y={y} fontSize="27" fontFamily='"Liberation Sans", sans-serif' fill="none" stroke={c} strokeWidth="1">{children}</text>
);
const Drawing = () => (
  <svg width="1304" height="583" viewBox="220 166 1304 583">
    {gridXs.flatMap(x => gridYs.map(y => <rect key={`${x}-${y}`} x={Math.round(x)} y={Math.round(y)} width="1" height="1" fill="#666" />))}
    <path d="M718.500 166V749M1397.500 166V749M220 581.500H1524" stroke="#777" strokeDasharray="1 3" />
    <path d="M562.500 166V749M220 449.500H1524" stroke="#ffc928" strokeWidth="1" strokeDasharray="4 2" />
    {[[583, 458], [720, 594], [854.5, 462], [996, 593], [1132, 460]].map(([x, y]) => <ellipse key={x} cx={x} cy={y} rx="23" ry="24" fill="#9a9a00" />)}
    <path d="M583 445L718.500 581L854 444L990 581L1126 445" fill="none" stroke="#22eef2" strokeWidth="1.200" />
    <path d="M583 445Q718.500 581 786.250 512.500T922 512.500Q990 581 1126 445" fill="none" stroke="#f4f4f4" strokeWidth="1.100" />
    <path d="M718.500 560V581" stroke="#e01010" />
    <path d="M698 581.500H740" stroke="#e56a10" />
    <circle cx="1126" cy="445" r="5" fill="none" stroke="#ff7a10" />
    <path d="M1120 445H1132M1126 439V451" stroke="#ff7a10" />
    <circle cx="561" cy="449" r="4" fill="none" stroke="#d8c000" />
    <CadText x={562} y={470} c="#e6e600">A</CadText>
    <CadText x={731} y={619} c="#fff">B</CadText>
    <CadText x={846} y={428} c="#fff">C</CadText>
    <CadText x={987} y={616} c="#e6e600">D</CadText>
    <CadText x={1124} y={438} c="#fff">E</CadText>
    <Cursor x={580} y={450} />
    <Cursor x={717} y={586} />
    <Cursor x={852} y={454} />
    <Cursor x={993} y={585} />
    <Cursor x={1129} y={453} />
  </svg>
);
const Chev = ({ dir }: { dir: 'u' | 'd' | 'l' | 'r' }) => {
  const d = { u: 'M2 8L7 3L12 8', d: 'M2 3L7 8L12 3', l: 'M9 2L4 7L9 12', r: 'M5 2L10 7L5 12' }[dir];
  return <svg width="14" height="14" viewBox="0 0 14 14"><path d={d} fill="none" stroke="#555" strokeWidth="2" /></svg>;
};

const MouseIcon = () => (
  <svg width="20" height="20" viewBox="0 0 20 20"><path d="M7 7C7 4 15 4 15 8V20H7Z" fill="#fff" stroke="#555" /><path d="M7 10H15M11 5V10" stroke="#555" /><path d="M11 5H15V10H11Z" fill={GREEN} /><path d="M1 4C3 2 5 7 7 4" fill="none" stroke="#777" /></svg>
);

const Sized = styled.svg`flex: none;`;
const MenuIconBox = styled.div`margin-left: 1px;`;

export default function App() {
  return (
    <Page>
      <Global />
      <Frame>
        <TitleBar>
          <Logo />
          <TitleText>LibreCAD - [未命名文件 2]</TitleText>
          <WinButtons>
            <WinButton><Sized width="14" height="14" viewBox="0 0 14 14"><path d="M1 7H13" stroke="#333" strokeWidth="1.200" /></Sized></WinButton>
            <WinButton><Sized width="14" height="14" viewBox="0 0 14 14"><rect x="1" y="1" width="12" height="12" fill="none" stroke="#333" strokeWidth="1.200" /></Sized></WinButton>
            <WinButton><Sized width="14" height="14" viewBox="0 0 14 14"><path d="M1 1L13 13M13 1L1 13" stroke="#333" strokeWidth="1.200" /></Sized></WinButton>
          </WinButtons>
        </TitleBar>
        <MenuBar>
          <MenuItem $w={35}><MenuIconBox><Sized width="12" height="14" viewBox="0 0 12 14"><path d="M1 1H9V13H1Z" fill="#fff" stroke="#888" /><circle cx="6" cy="7" r="2.500" fill="#fff" stroke="#222" /><path d="M8 9L11 12" stroke="#222" strokeWidth="1.500" /></Sized></MenuIconBox></MenuItem>
          <MenuItem $w={62}>檔案</MenuItem>
          <MenuItem $w={95}>Options</MenuItem>
          <MenuItem $w={75}>編輯</MenuItem>
          <MenuItem $w={64}>檢視</MenuItem>
          <MenuItem $w={77}>Plugins</MenuItem>
          <MenuItem $w={61}>Tools</MenuItem>
          <MenuItem $w={87}>Widgets</MenuItem>
          <MenuItem $w={109}>Drawings</MenuItem>
          <MenuItem $w={40}>說明</MenuItem>
          <MdiButtons>
            <MdiButton>-</MdiButton><MdiButton>▫</MdiButton><MdiButton>×</MdiButton>
          </MdiButtons>
        </MenuBar>

        <ToolRow $h={45}>
          <Grip $ml={3} />
          {top1.map((n, i) => <Slot key={i} $ml={i === 0 ? 6 : 0}>{n}</Slot>)}
          <Sep $ml={1} $h={44} />
          <Grip $ml={2} />
          <Slot $ml={8}>{selectIcon}</Slot>
          <Sep $ml={5} />
          <Slot $ml={3}>{undoIcon}</Slot>
          <Slot>{redoIcon}</Slot>
          <Sep $ml={3} />
          <Slot $ml={1}>{cutIcon}</Slot>
          <Slot $ml={4}>{copyIcon}</Slot>
          <Slot>{pasteIcon}</Slot>
          <Grip $ml={3} />
          <Slot $ml={10} $w={42} $active>{gridIcon}</Slot>
          <Slot>{draftIcon}</Slot>
          <Sep $ml={3} />
          {view.map((n, i) => <Slot key={i} $ml={i === 0 ? 4 : 0} $w={43.500}>{n}</Slot>)}
        </ToolRow>
        <ToolRow $h={47} $line>
          <Grip $ml={3} />
          <ComboRow>
            <Combo $w={118}><Swatch $kind="box" />依圖層<ComboArrow /></Combo>
            <Combo $w={161}><Swatch $kind="line" />依圖層<ComboArrow /></Combo>
            <Combo $w={170}><Swatch $kind="fill" />依圖層<ComboArrow /></Combo>
          </ComboRow>
          <Sep $ml={15} $h={44} />
          <Grip $ml={5} />
          <PlainLabel $ml={9} $w={36}>度：</PlainLabel>
          <MiniCombo>2<ComboArrow /></MiniCombo>
          <Check />
          <PlainLabel $ml={7} $w={54}>閉合的</PlainLabel>
          <ResetBtn>復原</ResetBtn>
          <Sep $ml={7} $h={20} />
          <Sep $ml={40} $h={44} />
          <Grip $ml={4} />
          {row2Icons.map((n, i) => <Slot key={i} $ml={i === 0 ? 7 : 0}>{n}</Slot>)}
        </ToolRow>

        <Main>
          <ToolColumn>
            <HGrip />
            {columnIcons.map((n, i) => (
              <ColumnItem key={i}><svg width="46" height="42" viewBox="0 0 46 42">{n}</svg></ColumnItem>
            ))}
          </ToolColumn>
          <Dock>
            <Section title="線" glyphs={lineTools} />
            <TabBar><Tab $w={55} $on>線</Tab><Tab $w={69}>折線</Tab></TabBar>
            <Section title="圓" mt={8} glyphs={circleTools} />
            <Section title="橢圓" mt={10} glyphs={ellipseTools} />
            <Section title="Curve" serif mt={10} glyphs={curveTools} on={3} />
            <Section title="資訊" mt={10} glyphs={infoTools} />
            <Section title="標註" mt={10} glyphs={dimTools} />
            <TabBar><Tab $w={73} $on>標註</Tab><Tab $w={69}>選取</Tab></TabBar>
            <Section title="修改" mt={7} glyphs={modifyTools} />
          </Dock>
          <Center>
            <CanvasRow>
              <Canvas><Drawing /></Canvas>
              <VScroll>
                <ArrowCell $h={30}><Chev dir="u" /></ArrowCell>
                <Spacer $size={185} />
                <VThumb />
                <Spacer />
                <ArrowCell $h={22}><Chev dir="d" /></ArrowCell>
              </VScroll>
            </CanvasRow>
            <HScroll>
              <HArrow><Chev dir="l" /></HArrow>
              <Spacer $size={387} />
              <HThumb />
              <Spacer />
              <HArrow><Chev dir="r" /></HArrow>
            </HScroll>
            <CommandArea>
              <CommandSide>
                <WinX />
                <WinFloat />
                <CmdLabel>Cmd</CmdLabel>
              </CommandSide>
              <CommandMain>
                <Output />
                <History>指定第一個控制點</History>
                <InputLine><Caret /></InputLine>
              </CommandMain>
            </CommandArea>
          </Center>
          <RightDock>
            <DockTitle><TitleLabel>圖層清單</TitleLabel><TitleBtns /></DockTitle>
            <RightInput />
            <ButtonRow $gap={38} $pl={30} $mt={11}>
              <IconButton><Eye /></IconButton>
              <IconButton><Eye gray /></IconButton>
              <IconButton><Small g={plusG} /></IconButton>
              <IconButton><Small g={minusG} /></IconButton>
              <IconButton><Small g={editG} /></IconButton>
            </ButtonRow>
            <LayerList>
              <LayerRow>
                <LayerCell><Eye /></LayerCell>
                <LayerCell><svg width="18" height="22" viewBox="0 0 18 22"><path d="M3 10V7C3 1 15 1 15 7V10" fill="none" stroke="#c8c8c8" strokeWidth="1.500" /><rect x="2" y="9" width="14" height="12" fill="#c8c8c8" /></svg></LayerCell>
                <LayerCell><svg width="16" height="16" viewBox="0 0 36 36"><Printer /></svg></LayerCell>
                <LayerCell><svg width="16" height="16" viewBox="0 0 16 16"><path d="M5 1V15M11 1V15M1 5H15M1 11H15" stroke="#999" strokeWidth="1.500" /></svg></LayerCell>
                <LayerCell><svg width="16" height="16" viewBox="0 0 16 16"><rect width="16" height="16" fill="#000" /></svg></LayerCell>
                <LayerName>0</LayerName>
              </LayerRow>
            </LayerList>
            <DockTitle $mt={11}><TitleLabel>圖塊清單</TitleLabel><TitleBtns /></DockTitle>
            <ButtonRow $gap={35} $pl={36} $mt={6}>
              <IconButton><Eye /></IconButton>
              <IconButton><Eye gray /></IconButton>
              <IconButton><Small g={blockG} /></IconButton>
              <IconButton><Small g={plusG} /></IconButton>
              <IconButton><Small g={minusG} /></IconButton>
            </ButtonRow>
            <ButtonRow $gap={48} $pl={49} $mt={2}>
              <IconButton><Small g={editG} /></IconButton>
              <IconButton><Small g={modifyTools[15]} /></IconButton>
              <IconButton><Small g={saveG} /></IconButton>
              <IconButton><Small g={addBlockG} /></IconButton>
            </ButtonRow>
            <BlockList />
          </RightDock>
        </Main>

        <BottomBar>
          <Grip $ml={4} $h={40} />
          <Slot $ml={6}><ExLabel>Ex</ExLabel></Slot>
          <Slot><Big><path d="M2 18H34M18 3V33" stroke="#111" strokeWidth="1.300" strokeDasharray="3 1.500" /></Big></Slot>
          <Slot><Big>{[6, 14, 22, 30].flatMap(y => [10, 18, 26].map(x => <circle key={`${x}${y}`} cx={x} cy={y} r="2.800" fill={GREEN} stroke="#111" />))}</Big></Slot>
          <Slot $active><Big><path d="M8 12C15 13 21 21 24 31M16 6C23 9 28 18 31 25" fill="none" stroke="#111" strokeWidth="1.500" /><circle cx="8" cy="12" r="3.200" fill={GREEN} stroke="#111" /><circle cx="16" cy="6" r="3.200" fill={GREEN} stroke="#111" /><circle cx="24" cy="31" r="3.200" fill={GREEN} stroke="#111" /><circle cx="31" cy="25" r="3.200" fill={GREEN} stroke="#111" /></Big></Slot>
          <Slot $w={20} />
          {snapIcons.map((n, i) => <Slot key={i} $ml={i === 0 ? 23 : 0}>{n}</Slot>)}
          <Sep $ml={5} />
          {restrictIcons.map((n, i) => <Slot key={i} $ml={i === 0 ? 2 : 0}>{n}</Slot>)}
          <Sep $ml={6} />
          <Slot $ml={1}>{Snap0}</Slot>
          <Slot>{Snap1}</Slot>
          <Sep $ml={1} $h={46} />
          <Grip $ml={3} $h={40} />
          <Slot $ml={8} $active><Monitor on green={[7, 6, 5, 20]} /></Slot>
          <Slot $active><Monitor on green={[24, 6, 5, 20]} /></Slot>
          <Slot><Monitor green={[7, 6, 22, 5]} /></Slot>
          <Slot $active><Monitor on green={[7, 20, 22, 6]} /></Slot>
          <Slot><Monitor green={[13, 10, 10, 10]} /></Slot>
          <Sep $ml={3} $h={46} />
          <Grip $ml={3} $h={40} />
          <Slot $ml={3}>{AddList}</Slot>
          <Slot>{AddBlock}</Slot>
          <Sep $ml={3} $h={46} />
          <Grip $ml={3} $h={40} />
          <Slot $ml={6}>{dimH}</Slot>
          <Slot>{dimV}</Slot>
        </BottomBar>
        <StatusBar>
          <StatusCell $w={192}>-22.8998 , 19.4301</StatusCell>
          <StatusCell $w={191}>-82.8998 , -0.5699</StatusCell>
          <StatusCell $w={306} $top={8}>指定第一個控制點<MouseIcon />取消</StatusCell>
          <StatusCell $w={47}>選取</StatusCell>
          <StatusCell $w={81}>選取線長</StatusCell>
          <StatusCell $w={121}>Current Layer</StatusCell>
          <StatusCell $w={108}>Grid Status</StatusCell>
        </StatusBar>
      </Frame>

      <Taskbar>
        <TaskStart />
        <TaskSlot $top={11}><svg width="24" height="24" viewBox="0 0 24 24"><path d="M0 4L10 2.500V12H0ZM12 2L24 0V12H12Z" fill="#fff" /></svg></TaskSlot>
        <TaskSlot $top={12}><svg width="22" height="22" viewBox="0 0 22 22"><circle cx="11" cy="11" r="9" fill="none" stroke="#fff" strokeWidth="1.600" /></svg></TaskSlot>
        <TaskSlot $top={8}><svg width="24" height="24" viewBox="0 0 24 24"><path d="M1 1V5H19V1M23 1V16" fill="none" stroke="#fff" strokeWidth="1.500" /></svg></TaskSlot>
        <TaskSlot $top={17}><svg width="32" height="28" viewBox="0 0 32 28"><path d="M0 2H12L14 4H32V28H0Z" fill="#f6c94f" /><path d="M0 6H32" stroke="#e4a92c" strokeWidth="2" /></svg></TaskSlot>
        <TaskSlot $top={14}><svg width="34" height="34" viewBox="0 0 34 34"><circle cx="17" cy="17" r="17" fill="#cf4a3a" /></svg></TaskSlot>
        <TaskSlot $top={14}><svg width="34" height="30" viewBox="0 0 34 30"><rect width="34" height="30" fill="#2a2a2a" stroke="#bbb" /><rect x="0" y="0" width="34" height="5" fill="#bbb" /><path d="M5 9H14" stroke="#eee" /></svg></TaskSlot>
        <TaskSlot $top={12}><svg width="36" height="30" viewBox="0 0 36 30"><rect width="36" height="30" rx="3" fill="#2b86e6" /><path d="M8 7L13 18L18 7" fill="none" stroke="#fff" strokeWidth="2" /><circle cx="25" cy="12" r="5" fill="none" stroke="#fff" strokeWidth="2" /></svg></TaskSlot>
        <TaskSlot $top={17}><svg width="32" height="28" viewBox="0 0 32 28"><path d="M8 0H32V28H0V8Z" fill="#2bb24c" /></svg></TaskSlot>
        <TaskSlot $top={14}><svg width="34" height="34" viewBox="0 0 34 34"><circle cx="17" cy="17" r="17" fill="#f39a1d" /><circle cx="18" cy="18" r="15.500" fill="#2b2159" /></svg></TaskSlot>
        <TaskSlot $on $top={12}><Logo s={36} /></TaskSlot>
        <TaskSlot $top={13}><svg width="30" height="30" viewBox="0 0 30 30"><path d="M4 4L26 0V30H4Z" fill="#cfdbe6" /><path d="M8 8H24M8 12H24" stroke="#7a9ab0" /></svg></TaskSlot>
        <TaskSlot $top={13}><svg width="30" height="30" viewBox="0 0 30 30"><path d="M3 4L27 0V30H3Z" fill="#e7edf2" /><path d="M14 4V14" stroke="#7a9ab0" /></svg></TaskSlot>
        <ClockText>上午 02:39</ClockText>
        <Tray>
          <svg width="130" height="14" viewBox="0 0 130 14"><path d="M6 10V0M9 10V0" stroke="#ddd" /><path d="M62 6L68 2" stroke="#ddd" fill="none" /><path d="M105 9L110 3L115 9" fill="none" stroke="#ddd" /></svg>
          <svg width="12" height="12" viewBox="0 0 12 12"><circle cx="6" cy="6" r="4.500" fill="none" stroke="#ddd" strokeWidth="1.500" /></svg>
          <svg width="22" height="10" viewBox="0 0 22 10"><path d="M1 2H21M11 0V10" stroke="#fff" strokeWidth="2" /></svg>
          <svg width="22" height="10" viewBox="0 0 22 10"><rect x="1" y="1" width="20" height="20" fill="none" stroke="#fff" strokeWidth="2" /><rect x="7" y="3" width="8" height="7" fill="#ddd" /></svg>
          <Spacer $size={90} />
          <svg width="24" height="10" viewBox="0 0 24 10"><rect x="1" y="1" width="22" height="20" fill="none" stroke="#fff" strokeWidth="2" /></svg>
        </Tray>
      </Taskbar>

      <RedOval />
      <Ring $x={143} $y={521} $w={37} $h={30} $r={4} />
      <Ring $x={140} $y={941} $w={51} $h={50} $r={6} />
      <Badge $x={203} $y={538}>1</Badge>
      <Badge $x={218} $y={966}>2</Badge>
      <Badge $x={581} $y={200}>3</Badge>
      <Badge $x={579} $y={405}>4</Badge>
      <Badge $x={719} $y={644}>5</Badge>
      <Badge $x={857} $y={512}>6</Badge>
      <Badge $x={998} $y={642}>7</Badge>
      <Badge $x={1178} $y={462}>8</Badge>
      <Badge $x={1224} $y={459}>9</Badge>
      <Note>第九步<br />右鍵完成雲形線</Note>
    </Page>
  );
}
